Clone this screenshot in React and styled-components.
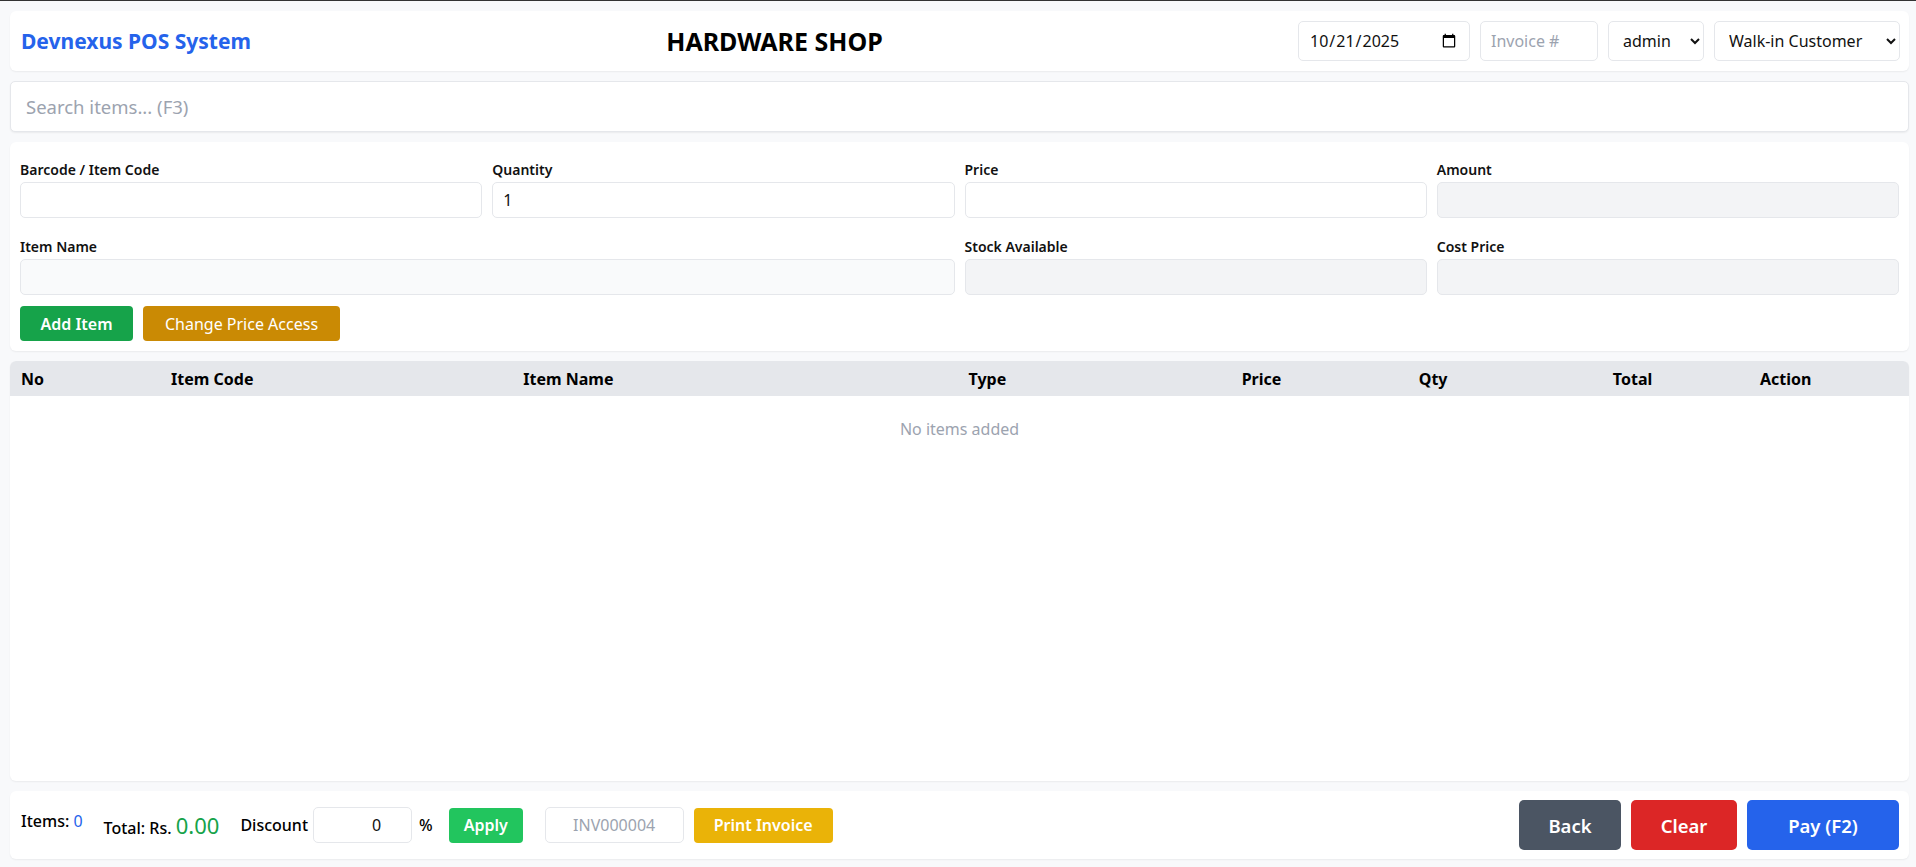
import React from 'react'
import styled, { createGlobalStyle } from 'styled-components'

const GlobalStyle = createGlobalStyle`
    * { box-sizing: border-box; }
    html, body {
        margin: 0;
        padding: 0;
        height: 100%;
    }
    body {
        background: #f8f9fb;
        border-top: 1px solid #333;
        font-family: "Noto Sans", "Open Sans", sans-serif;
        color: #111827;
    }
    input, select, button {
        font-family: inherit;
    }
`

const Page = styled.div`
    height: 866px;
    display: flex;
    flex-direction: column;
    gap: 10px;
    padding: 10px 7px 8px 10px;
`

const Card = styled.div`
    background: #fff;
    border-radius: 6px;
    box-shadow: 0 1px 2px rgba(0, 0, 0, 0.06);
`

const Header = styled(Card)`
    height: 60px;
    flex-shrink: 0;
    display: flex;
    align-items: center;
    justify-content: space-between;
    padding: 0 9px 0 11px;
`

const Brand = styled.h1`
    margin: 0;
    font-size: 21px;
    font-weight: 700;
    color: #2563eb;
`

const ShopName = styled.h2`
    margin: 0;
    font-size: 25px;
    font-weight: 700;
    color: #000;
`

const Controls = styled.div`
    display: flex;
    gap: 10px;
`

const Field = styled.input`
    height: ${p => p.$h || 36}px;
    width: ${p => (p.$w ? p.$w + 'px' : '100%')};
    border: 1px solid #e5e7eb;
    border-radius: 5px;
    padding: 0 10px;
    font-size: 16px;
    color: #111;
    background: ${p => p.$bg || '#fff'};
    text-align: ${p => p.$align || 'left'};
    outline: none;
    &::placeholder { color: #9ca3af; }
`

const Select = styled.select`
    height: 40px;
    width: ${p => p.$w}px;
    border: 1px solid #e5e7eb;
    border-radius: 5px;
    padding: 0 6px 0 10px;
    font-size: 16px;
    color: #111;
    background: #fff;
`

const Search = styled.input`
    height: 51px;
    flex-shrink: 0;
    width: 100%;
    border: 1px solid #e5e7eb;
    border-radius: 5px;
    box-shadow: 0 1px 2px rgba(0, 0, 0, 0.06);
    padding: 0 15px;
    font-size: 18.5px;
    outline: none;
    background: #fff;
    &::placeholder { color: #9ca3af; }
`

const Form = styled(Card)`
    flex-shrink: 0;
    padding: 16px 10px 10px;
`

const Grid = styled.div`
    display: grid;
    grid-template-columns: repeat(4, 1fr);
    column-gap: 10px;
    row-gap: 17px;
`

const Group = styled.div`
    grid-column: span ${p => p.$span || 1};
    display: flex;
    flex-direction: column;
`

const Label = styled.label`
    font-size: 14px;
    line-height: 24px;
    font-weight: 600;
    color: #111;
`

const Actions = styled.div`
    display: flex;
    gap: 10px;
    margin-top: 11px;
`

const Button = styled.button`
    height: ${p => p.$h || 35}px;
    width: ${p => p.$w}px;
    margin-left: ${p => p.$ml || 0}px;
    border: none;
    border-radius: ${p => p.$r || 4}px;
    background: ${p => p.$bg};
    color: #fff;
    font-size: ${p => p.$fs || 16}px;
    font-weight: ${p => p.$fw || 600};
    padding: 0;
    cursor: pointer;
`

const TableCard = styled(Card)`
    flex: 1;
    overflow: hidden;
`

const Row = styled.div`
    display: grid;
    grid-template-columns: 150fr 352fr 445fr 273fr 177fr 194fr 147fr 160fr;
`

const HeadRow = styled(Row)`
    height: 35px;
    align-items: center;
    background: #e5e7eb;
    font-weight: 700;
    font-size: 16px;
    color: #000;
`

const HeadCell = styled.div`
    padding-left: 11px;
`

const Empty = styled.div`
    padding: 21px 0;
    text-align: center;
    font-size: 16px;
    line-height: 24px;
    color: #9ca3af;
`

const Footer = styled(Card)`
    height: 68px;
    flex-shrink: 0;
    display: flex;
    align-items: center;
    justify-content: space-between;
    padding: 0 10px 0 11px;
`

const Summary = styled.div`
    display: flex;
    align-items: center;
    font-size: 16px;
    font-weight: 500;
    color: #000;
`

const Text = styled.span`
    margin-top: ${p => p.$up ? '-8px' : '0'};
    margin-left: ${p => p.$ml || 0}px;
`

const Value = styled.span`
    color: ${p => p.$color};
    font-size: ${p => p.$fs || 16}px;
    font-weight: 400;
`

const Buttons = styled.div`
    display: flex;
    gap: 10px;
`

export default function App() {
    return (
        <>
            <GlobalStyle />
            <Page>
                <Header>
                    <Brand>Devnexus POS System</Brand>
                    <ShopName>HARDWARE SHOP</ShopName>
                    <Controls>
                        <Field type="date" defaultValue="2025-10-21" $w={172} $h={40} />
                        <Field placeholder="Invoice #" $w={118} $h={40} />
                        <Select $w={96} defaultValue="admin">
                            <option>admin</option>
                        </Select>
                        <Select $w={186} defaultValue="walk">
                            <option value="walk">Walk-in Customer</option>
                        </Select>
                    </Controls>
                </Header>

                <Search placeholder="Search items... (F3)" />

                <Form>
                    <Grid>
                        <Group>
                            <Label>Barcode / Item Code</Label>
                            <Field />
                        </Group>
                        <Group>
                            <Label>Quantity</Label>
                            <Field defaultValue="1" />
                        </Group>
                        <Group>
                            <Label>Price</Label>
                            <Field />
                        </Group>
                        <Group>
                            <Label>Amount</Label>
                            <Field readOnly $bg="#f3f4f6" />
                        </Group>
                        <Group $span={2}>
                            <Label>Item Name</Label>
                            <Field readOnly $bg="#f9fafb" />
                        </Group>
                        <Group>
                            <Label>Stock Available</Label>
                            <Field readOnly $bg="#f3f4f6" />
                        </Group>
                        <Group>
                            <Label>Cost Price</Label>
                            <Field readOnly $bg="#f3f4f6" />
                        </Group>
                    </Grid>
                    <Actions>
                        <Button $bg="#16a34a" $w={113}>Add Item</Button>
                        <Button $bg="#ca8a04" $w={197} $fw={400}>Change Price Access</Button>
                    </Actions>
                </Form>

                <TableCard>
                    <HeadRow>
                        {['No', 'Item Code', 'Item Name', 'Type', 'Price', 'Qty', 'Total', 'Action'].map(h => (
                            <HeadCell key={h}>{h}</HeadCell>
                        ))}
                    </HeadRow>
                    <Empty>No items added</Empty>
                </TableCard>

                <Footer>
                    <Summary>
                        <Text $up>Items: <Value $color="#2563eb">0</Value></Text>
                        <Text $ml={21}>Total: Rs. <Value $color="#16a34a" $fs={22}>0.00</Value></Text>
                        <Text $ml={21}>Discount</Text>
                        <Field defaultValue="0" $w={99} $align="right" style={{ marginLeft: 5, paddingRight: 30 }} />
                        <Text $ml={7}>%</Text>
                        <Button $bg="#22c55e" $w={74} $ml={16}>Apply</Button>
                        <Field placeholder="INV000004" $w={139} $align="center" style={{ marginLeft: 22 }} />
                        <Button $bg="#eab308" $w={139} $ml={10}>Print Invoice</Button>
                    </Summary>
                    <Buttons>
                        <Button $bg="#4b5563" $w={102} $h={50} $fs={18.5} $r={5}>Back</Button>
                        <Button $bg="#dc2626" $w={106} $h={50} $fs={18.5} $r={5}>Clear</Button>
                        <Button $bg="#2563eb" $w={152} $h={50} $fs={18.5} $r={5}>Pay (F2)</Button>
                    </Buttons>
                </Footer>
            </Page>
        </>
    )
}
